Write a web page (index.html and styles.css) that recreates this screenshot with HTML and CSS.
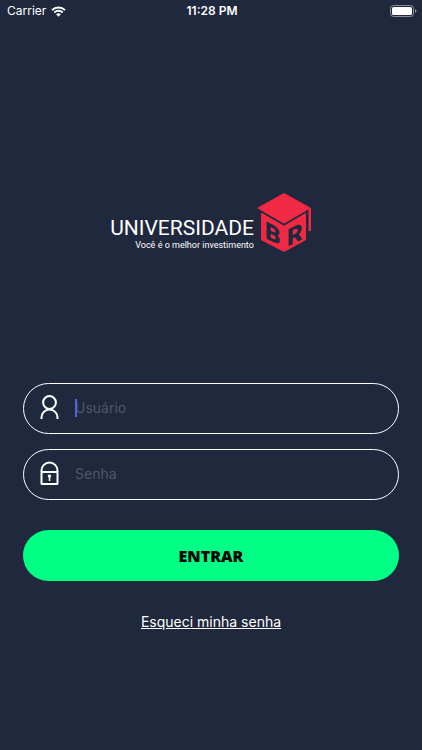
FILE: index.html
```html
<!DOCTYPE html>
<html lang="pt-BR">

<head>
  <meta charset="UTF-8">
  <meta name="viewport" content="width=device-width, initial-scale=1.0">
  <title>Universidade BR</title>
  <link rel="stylesheet" href="styles.css">
</head>

<body>
  <header class="status-bar">
    <div class="carrier">
      <span>Carrier</span>
      <svg class="wifi" viewBox="0 0 15 11" width="15" height="11" aria-hidden="true">
        <path d="M1 4.1a9.4 9.4 0 0 1 13 0M3.3 6.5a6.1 6.1 0 0 1 8.4 0" fill="none" stroke="#fff" stroke-width="2"/>
        <path d="M5.1 8.3a3.5 3.5 0 0 1 4.8 0L7.5 10.8z" fill="#fff"/>
      </svg>
    </div>
    <div class="clock">11:28 PM</div>
    <div class="battery">
      <svg viewBox="0 0 27 12" width="27" height="12" aria-hidden="true">
        <rect x="0.5" y="0.5" width="23" height="11" rx="3" fill="none" stroke="#8a8f9c"/>
        <rect x="2" y="2" width="20" height="8" rx="1.6" fill="#fff"/>
        <path d="M25 4a2.1 2.1 0 0 1 0 4z" fill="#8a8f9c"/>
      </svg>
    </div>
  </header>

  <main class="login">
    <div class="logo">
      <div class="logo-text">
        <span class="logo-name">UNIVERSIDADE</span>
        <span class="logo-slogan">Você é o melhor investimento</span>
      </div>
      <svg class="logo-cube" viewBox="0 0 56 60" width="56" height="60" role="img" aria-label="BR">
        <path d="M5 18L28 31L50 18.5V48L28 60L5 48z" fill="#f02a44"/>
        <path d="M1 17L28 32.5L52 18.5" fill="none" stroke="#20283d" stroke-width="2"/>
        <path d="M28 1L55 16L28 31.5L1 16z" fill="#f02a44"/>
        <path d="M52.5 17L55 16V39H52.5z" fill="#f02a44"/>
        <text class="cube-letter" transform="translate(9 46) skewY(27)">B</text>
        <text class="cube-letter" transform="translate(31 55) skewY(-27)">R</text>
      </svg>
    </div>

    <form class="login-form">
      <div class="field">
        <label for="usuario" aria-label="Usuário">
          <svg viewBox="0 0 20 28" width="20" height="28" aria-hidden="true">
            <circle cx="10.5" cy="7.5" r="6.4"/>
            <path d="M2.5 24v-1.5a8 8 0 0 1 16 0V24"/>
          </svg>
        </label>
        <div class="field-box">
          <input type="text" id="usuario" placeholder="Usuário">
          <span class="caret"></span>
        </div>
      </div>

      <div class="field">
        <label for="senha" aria-label="Senha">
          <svg viewBox="0 0 20 28" width="20" height="28" aria-hidden="true">
            <path d="M2.5 11V9.5a8 8 0 0 1 16 0V11"/>
            <rect x="2.5" y="11" width="16" height="12" rx="0.5"/>
            <path class="keyhole" d="M10.5 13.5a1.7 1.7 0 0 1 .8 3.2V20H9.7v-3.3A1.7 1.7 0 0 1 10.5 13.5z"/>
          </svg>
        </label>
        <div class="field-box">
          <input type="password" id="senha" placeholder="Senha">
        </div>
      </div>

      <button type="submit" class="btn-entrar">ENTRAR</button>
    </form>

    <a class="forgot" href="#">Esqueci minha senha</a>
  </main>
</body>

</html>
```

FILE: styles.css
```css
* {
  box-sizing: border-box;
}

body {
  margin: 0;
  min-height: 100vh;
  background-color: #20283d;
  color: #fff;
  font-family: Inter, "Liberation Sans", sans-serif;
}

/* Barra de status */
.status-bar {
  display: grid;
  grid-template-columns: 1fr auto 1fr;
  align-items: center;
  height: 22px;
  padding: 0 5px 0 7px;
  font-size: 12px;
  line-height: 22px;
}

.carrier {
  display: flex;
  align-items: center;
  gap: 5px;
}

.clock {
  font-weight: 600;
}

.battery {
  display: flex;
  justify-content: flex-end;
}

/* Logo */
.login {
  display: flex;
  flex-direction: column;
  align-items: center;
  padding: 170px 23px 40px;
}

.logo {
  display: flex;
  align-items: flex-end;
  gap: 2px;
  margin-bottom: 131px;
}

.logo-text {
  display: flex;
  flex-direction: column;
  align-items: flex-end;
}

.logo-name {
  font-family: Roboto, sans-serif;
  font-size: 21px;
  line-height: 20px;
}

.logo-slogan {
  font-family: Roboto, sans-serif;
  font-size: 9px;
  line-height: 14px;
}

.cube-letter {
  font-family: Roboto, sans-serif;
  font-size: 24px;
  font-weight: 900;
  fill: #20283d;
}

/* Formulario */
.login-form {
  display: flex;
  flex-direction: column;
  gap: 15px;
  width: 100%;
}

.field {
  display: flex;
  align-items: center;
  gap: 16px;
  height: 51px;
  padding: 0 15px;
  border: 1px solid #fff;
  border-radius: 26px;
}

.field label,
.field svg {
  display: block;
}

.field svg {
  fill: none;
  stroke: #fff;
  stroke-width: 2;
}

.field .keyhole {
  fill: #fff;
  stroke: none;
}

.field-box {
  position: relative;
  flex: 1;
}

.field input {
  display: block;
  width: 100%;
  height: 20px;
  padding: 0 0 2px;
  border: none;
  outline: none;
  background: none;
  color: #fff;
  font-family: inherit;
  font-size: 14px;
}

.field input::placeholder {
  color: #50566a;
}

.caret {
  position: absolute;
  top: 0;
  left: 0;
  width: 2px;
  height: 18px;
  background-color: #4568e0;
}

.btn-entrar {
  height: 51px;
  margin-top: 15px;
  border: none;
  border-radius: 26px;
  background-color: #00ff85;
  color: #000;
  font-family: "Open Sans", sans-serif;
  font-size: 16px;
  font-weight: 800;
  cursor: pointer;
}

.forgot {
  margin-top: 31px;
  color: #fff;
  font-size: 14px;
  line-height: 20px;
}
```
